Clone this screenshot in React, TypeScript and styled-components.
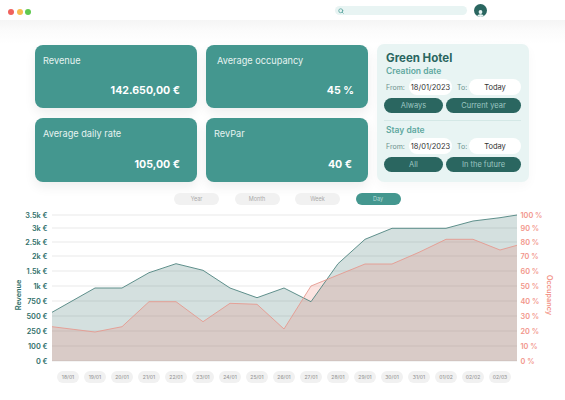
import React from 'react';
import styled, { createGlobalStyle } from 'styled-components';
import { Search } from 'lucide-react';

const GlobalStyle = createGlobalStyle`
  html, body {
    margin: 0;
    padding: 0;
    background: #fff;
  }
  * {
    box-sizing: border-box;
  }
`;

const Page = styled.div`
  width: 565px;
  height: 400px;
  overflow: hidden;
  display: flex;
  flex-direction: column;
  background: #fff;
  font-family: Inter, "Open Sans", sans-serif;
`;

const TopBar = styled.header`
  height: 20px;
  flex: none;
  display: flex;
  align-items: center;
  padding: 1px 78px 0 8px;
  background: #fff;
`;

const Dots = styled.div`
  display: flex;
  gap: 2.5px;
  margin-right: auto;
  padding-top: 2px;
`;

const Dot = styled.span<{ $color: string }>`
  width: 6px;
  height: 6px;
  border-radius: 50%;
  background: ${p => p.$color};
`;

const SearchBox = styled.div`
  flex: none;
  width: 132px;
  height: 9px;
  margin-right: 7px;
  padding-left: 3px;
  display: flex;
  align-items: center;
  border-radius: 5px;
  background: #e8f4f3;
  color: #4f9f98;
`;

const Avatar = styled.div`
  flex: none;
  width: 13px;
  height: 13px;
  border-radius: 50%;
  background: #2a6660;
  overflow: hidden;
`;

const Summary = styled.section`
  flex: none;
  height: 173px;
  display: flex;
  gap: 9px;
  padding: 24px 0 0 35px;
  background: linear-gradient(#f5f5f5, #fbfbfb 10px, #fff 24px);
`;

const CardGrid = styled.div`
  display: grid;
  grid-template-columns: 162px 162px;
  grid-template-rows: 63px 64px;
  gap: 10px 9px;
  margin-top: 1px;
`;

const Card = styled.div<{ $labelInset: number; $valueInset: number }>`
  display: flex;
  flex-direction: column;
  justify-content: space-between;
  padding: 9px ${p => p.$valueInset}px 10px ${p => p.$labelInset}px;
  border-radius: 8px;
  background: #44978f;
  color: #fff;
  box-shadow: 0 5px 12px rgba(0, 0, 0, 0.07);
`;

const CardLabel = styled.div`
  font-size: 9.2px;
  line-height: 13px;
  font-weight: 400;
  color: #e6f3f1;
`;

const CardValue = styled.div`
  font-size: 10.6px;
  line-height: 14px;
  font-weight: 700;
  text-align: right;
`;

const Panel = styled.aside`
  width: 152px;
  height: 138px;
  padding: 8px 8px 0 7px;
  border-radius: 7px;
  background: #e8f4f3;
  box-shadow: 0 4px 12px rgba(0, 0, 0, 0.03);
`;

const HotelName = styled.h2`
  margin: 0 0 1px 2px;
  font-size: 11.5px;
  line-height: 13px;
  font-weight: 700;
  color: #2a6660;
`;

const DateTitle = styled.h3`
  margin: 0 0 0 2px;
  font-size: 8.5px;
  line-height: 11px;
  font-weight: 600;
  color: #5fa8a0;
`;

const DateRow = styled.div`
  display: flex;
  align-items: center;
  margin-top: 2px;
`;

const FieldLabel = styled.span<{ $width: number; $inset?: number }>`
  width: ${p => p.$width}px;
  padding-left: ${p => p.$inset ?? 2}px;
  font-size: 7px;
  color: #6a918d;
`;

const DateField = styled.div<{ $width: number }>`
  width: ${p => p.$width}px;
  height: 16px;
  display: flex;
  align-items: center;
  justify-content: center;
  border-radius: 8px;
  background: #fff;
  font-size: 7.5px;
  color: #333;
`;

const ButtonRow = styled.div`
  display: grid;
  grid-template-columns: 59px 75px;
  gap: 3px;
  margin-top: 3px;
`;

const PanelButton = styled.div`
  height: 15px;
  display: flex;
  align-items: center;
  justify-content: center;
  border-radius: 8px;
  background: #2a6660;
  font-size: 7.5px;
  color: #9cc7c2;
`;

const Divider = styled.hr`
  height: 1px;
  margin: 7px 0 4px;
  border: 0;
  background: #d4e8e6;
`;

const RangeTabs = styled.nav`
  flex: none;
  display: flex;
  gap: 15.5px;
  padding-left: 174px;
`;

const RangeTab = styled.div<{ $active?: boolean }>`
  width: 45px;
  height: 12px;
  display: flex;
  align-items: center;
  justify-content: center;
  border-radius: 6px;
  font-size: 5.5px;
  background: ${p => (p.$active ? '#44978f' : '#f1f1f1')};
  color: ${p => (p.$active ? '#b9dcd8' : '#aaa')};
`;

const ChartSvg = styled.svg`
  display: block;
  flex: none;
  width: 565px;
  height: 160px;
  margin-top: 2px;
`;

const DateRowAxis = styled.div`
  flex: none;
  display: flex;
  gap: 5px;
  margin-top: 4px;
  padding-left: 57px;
`;

const DatePill = styled.div`
  width: 22px;
  height: 12px;
  display: flex;
  align-items: center;
  justify-content: center;
  border-radius: 6px;
  background: #f1f1f1;
  font-size: 5px;
  font-weight: 500;
  color: #999;
`;

const AxisText = styled.text<{ $color: string }>`
  font-size: 7.3px;
  font-weight: 600;
  fill: ${p => p.$color};
  dominant-baseline: central;
`;

const leftTicks = ['0 €', '100 €', '250 €', '500 €', '750 €', '1k €', '1.5k €', '2k €', '2.5k €', '3k €', '3.5k €'];
const rightTicks = ['0 %', '10 %', '20 %', '30 %', '40 %', '50 %', '60 %', '70 %', '80 %', '90 %', '100 %'];
const gridY = [361, 346, 331, 316, 301, 286, 271, 256, 242, 228, 215];

const revenue: number[][] = [
  [52, 312.3], [95, 288], [122, 288], [149, 272.7], [176, 263.7], [203, 270.3], [230, 288], [257, 297.7], [284, 288],
  [311, 301.7], [338, 263.7], [365, 239.3], [392, 228.3], [419, 228.3], [446, 228.3], [473, 221], [500, 217.7], [517, 215],
];
const occupancy: number[][] = [
  [52, 326.7], [95, 332], [122, 326.7], [149, 301.7], [176, 301.7], [203, 321.7], [230, 303.3], [257, 304.3], [284, 329],
  [311, 286], [338, 275], [365, 264], [392, 264], [419, 252.3], [446, 239.3], [473, 239.3], [500, 250], [517, 245.3],
];

const linePoints = (pts: number[][]) => pts.map(p => p.join(',')).join(' ');
const areaPoints = (pts: number[][]) => `52,361 ${linePoints(pts)} 517,361`;

const dates = ['18/01', '19/01', '20/01', '21/01', '22/01', '23/01', '24/01', '25/01', '26/01', '27/01', '28/01', '29/01', '30/01', '31/01', '01/02', '02/02', '02/03'];

const DateBlock = ({ title, buttons }: { title: string; buttons: string[] }) => (
  <>
    <DateTitle>{title}</DateTitle>
    <DateRow>
      <FieldLabel $width={25}>From:</FieldLabel>
      <DateField $width={43}>18/01/2023</DateField>
      <FieldLabel $width={17} $inset={5}>To:</FieldLabel>
      <DateField $width={52}>Today</DateField>
    </DateRow>
    <ButtonRow>
      {buttons.map(b => (
        <PanelButton key={b}>{b}</PanelButton>
      ))}
    </ButtonRow>
  </>
);

const App: React.FC = () => {
  return (
    <Page>
      <GlobalStyle />
      <TopBar>
        <Dots>
          <Dot $color="#f0625d" />
          <Dot $color="#f6bd4f" />
          <Dot $color="#5fc94f" />
        </Dots>
        <SearchBox>
          <Search size={6} strokeWidth={3} />
        </SearchBox>
        <Avatar>
          <svg viewBox="0 0 13 13" width="13" height="13">
            <circle cx="6.5" cy="5" r="1.9" fill="#e8f4f3" />
            <path d="M3.3 11.2 V9.6 C3.3 8 4.6 7.3 6.5 7.3 C8.4 7.3 9.7 8 9.7 9.6 V11.2 Z" fill="#e8f4f3" />
          </svg>
        </Avatar>
      </TopBar>

      <Summary>
        <CardGrid>
          <Card $labelInset={8} $valueInset={17}>
            <CardLabel>Revenue</CardLabel>
            <CardValue>142.650,00 €</CardValue>
          </Card>
          <Card $labelInset={11} $valueInset={14}>
            <CardLabel>Average occupancy</CardLabel>
            <CardValue>45 %</CardValue>
          </Card>
          <Card $labelInset={8} $valueInset={17}>
            <CardLabel>Average daily rate</CardLabel>
            <CardValue>105,00 €</CardValue>
          </Card>
          <Card $labelInset={8} $valueInset={16}>
            <CardLabel>RevPar</CardLabel>
            <CardValue>40 €</CardValue>
          </Card>
        </CardGrid>
        <Panel>
          <HotelName>Green Hotel</HotelName>
          <DateBlock title="Creation date" buttons={['Always', 'Current year']} />
          <Divider />
          <DateBlock title="Stay date" buttons={['All', 'In the future']} />
        </Panel>
      </Summary>

      <RangeTabs>
        <RangeTab>Year</RangeTab>
        <RangeTab>Month</RangeTab>
        <RangeTab>Week</RangeTab>
        <RangeTab $active>Day</RangeTab>
      </RangeTabs>

      <ChartSvg viewBox="0 207 565 160">
        {gridY.map(y => (
          <line key={y} x1="52" x2="517" y1={y} y2={y} stroke="#e9e9e9" strokeWidth="1" />
        ))}
        <polygon points={areaPoints(revenue)} fill="rgba(42,102,96,0.2)" />
        <polygon points={areaPoints(occupancy)} fill="rgba(240,120,105,0.2)" />
        <polyline points={linePoints(revenue)} fill="none" stroke="#4f8580" strokeWidth="0.9" />
        <polyline points={linePoints(occupancy)} fill="none" stroke="#e59a90" strokeWidth="0.9" />
        {leftTicks.map((t, i) => (
          <AxisText key={t} $color="#2f6f69" x="47.5" y={gridY[i]} textAnchor="end">{t}</AxisText>
        ))}
        {rightTicks.map((t, i) => (
          <AxisText key={t} $color="#f2958a" x="520.5" y={gridY[i]}>{t}</AxisText>
        ))}
        <AxisText $color="#2f6f69" textAnchor="middle" transform="translate(18 295) rotate(-90)">Revenue</AxisText>
        <AxisText $color="#f2958a" textAnchor="middle" transform="translate(549 295) rotate(90)">Occupancy</AxisText>
      </ChartSvg>

      <DateRowAxis>
        {dates.map(d => (
          <DatePill key={d}>{d}</DatePill>
        ))}
      </DateRowAxis>
    </Page>
  );
};

export default App;
